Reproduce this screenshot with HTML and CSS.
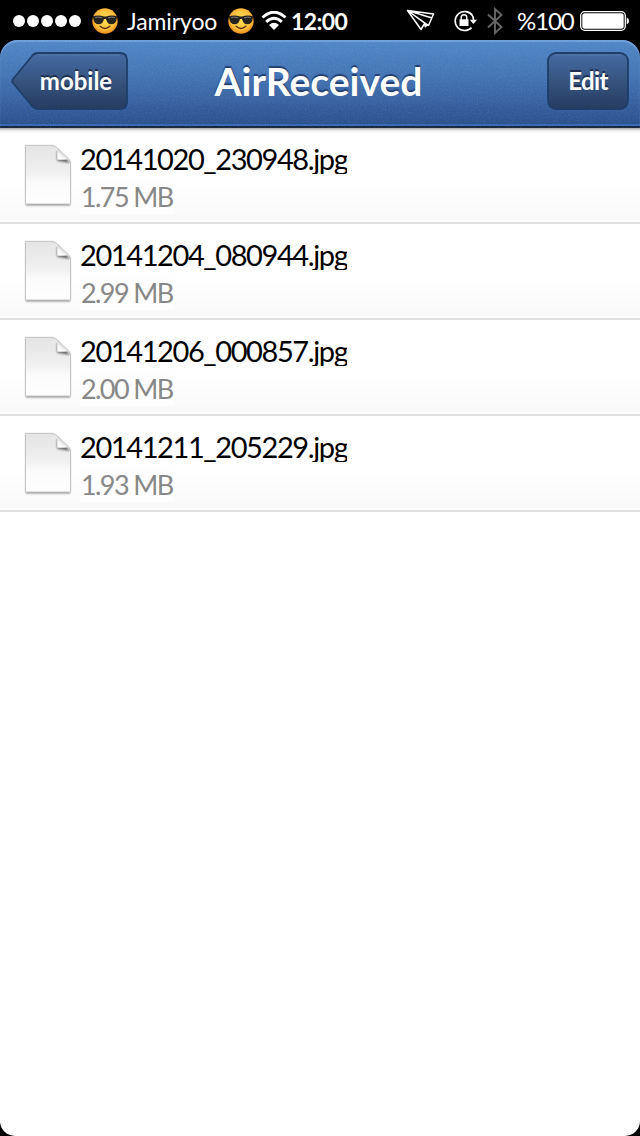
FILE: index.html
```html
<!DOCTYPE html>
<html lang="en">
<head>
<meta charset="utf-8">
<title>AirReceived</title>
<link rel="stylesheet" href="styles.css">
</head>
<body>
<svg class="defs" width="0" height="0" aria-hidden="true">
  <defs>
    <radialGradient id="face" cx=".5" cy=".45" r=".55">
      <stop offset="0" stop-color="#ffe052"/><stop offset=".7" stop-color="#fdc03c"/><stop offset="1" stop-color="#e98b1c"/>
    </radialGradient>
    <linearGradient id="sheet" x1="0" y1="0" x2="0" y2="1">
      <stop offset="0" stop-color="#e4e4e4"/><stop offset=".5" stop-color="#f1f1f1"/><stop offset=".62" stop-color="#fafafa"/><stop offset="1" stop-color="#fff"/>
    </linearGradient>
    <linearGradient id="fold" x1=".1" y1=".9" x2=".7" y2=".2">
      <stop offset="0" stop-color="#fff"/><stop offset=".5" stop-color="#e4e4e4"/><stop offset="1" stop-color="#999"/>
    </linearGradient>
    <linearGradient id="button" x1="0" y1="0" x2="0" y2="1">
      <stop offset="0" stop-color="#456aa3"/><stop offset=".5" stop-color="#36547f"/><stop offset="1" stop-color="#263b61"/>
    </linearGradient>
    <filter id="soft" x="-30%" y="-30%" width="160%" height="160%"><feGaussianBlur stdDeviation="1"/></filter>
    <filter id="grain" x="0" y="0" width="100%" height="100%">
      <feTurbulence type="fractalNoise" baseFrequency=".75" numOctaves="2" seed="4"/>
      <feColorMatrix values="0 0 0 0 1  0 0 0 0 1  0 0 0 0 1  1.2 0 0 0 -.5"/>
    </filter>
    <symbol id="cool" viewBox="0 0 26 26">
      <circle cx="13" cy="13" r="12.7" fill="url(#face)"/>
      <path d="M.8 8.2Q7 6.7 12 8.6h2Q19 6.7 25.2 8.2l-.5 2.2q-.7 5.8-5.4 5.8-4.2 0-5.3-5.3h-2q-1.100 5.300-5.300 5.300-4.700 0-5.400-5.800z" fill="#242220"/>
      <path d="M3 9.500q3.500-1 7.200.4M16 9.900q3.500-1.400 7-.4" stroke="#777" fill="none"/>
      <path d="M8.200 18.300q4.800 4.500 9.600 0" stroke="#5b3010" stroke-width="1.500" fill="none" stroke-linecap="round"/>
    </symbol>
    <symbol id="file" viewBox="0 0 52 66">
      <path d="M3 3h27l17 17v42.300H3z" fill="#777" filter="url(#soft)"/>
      <path d="M2.500 2.500H28Q32 2.500 34 4.500L46 16.500q1.500 2 1.500 4v40.500h-45z" fill="url(#sheet)" stroke="#c6c6c6"/>
      <path d="M34 8v9.500L46.500 20 44 16z" fill="#666" filter="url(#soft)"/>
      <path d="M34.500 5v11.500H46z" fill="url(#fold)"/>
      <path d="M34.500 9v7.500h8z" fill="#fafafa"/>
    </symbol>
  </defs>
</svg>
<div class="screen">
  <header class="status">
    <div class="side">
      <div class="signal"><i></i><i></i><i></i><i></i><i></i></div>
      <svg class="emoji" width="26" height="26"><use href="#cool"/></svg>
      <span class="carrier">Jamiryoo</span>
      <svg class="emoji" width="26" height="26"><use href="#cool"/></svg>
      <svg class="wifi" width="26" height="20" viewBox="0 0 26 20">
        <path d="M1.500 6.500Q13-4 24.500 6.500M5.200 10.800Q13 3.800 20.800 10.800" fill="none" stroke="#fff" stroke-width="3"/>
        <path d="M8 14q5-4.500 10 0l-5 5z" fill="#fff"/>
      </svg>
      <span class="clock">12:00</span>
    </div>
    <div class="side">
      <svg class="plane" width="30" height="24" viewBox="0 0 30 24" fill="none" stroke="#fff" stroke-width="1.500" stroke-linejoin="round">
        <path d="M1.500 1.500L27.500 5 22.500 16.500 18.800 14.200 15 20.500zM1.500 1.500L18.800 14.200M1.500 1.500L22.500 16.500M1.500 1.500L26 9M18.800 14.200l.5 3.500 2-2"/>
      </svg>
      <svg class="lock" width="24" height="22" viewBox="0 0 24 22">
        <path d="M19.400 5.500A9.500 9.500 0 1 0 18.500 17.600M18.500 4.300Q20.700 7 20.600 10.500" fill="none" stroke="#fff" stroke-width="1.600"/>
        <path d="M16.800 9.800h7.200l-3.600 4.200z" fill="#fff"/>
        <path d="M6.500 9.300h9V16h-9z" fill="#fff"/><path d="M8.200 10V7.500a2.800 2.800 0 0 1 5.600 0V10" fill="none" stroke="#fff" stroke-width="1.400"/>
      </svg>
      <svg class="bluetooth" width="16" height="28" viewBox="0 0 16 28"><path d="M1 7.500L14.500 20 8 26V2l6.500 6L1 20.500" fill="none" stroke="#666" stroke-width="1.900"/></svg>
      <span class="percent">%100</span>
      <svg class="battery" width="50" height="20" viewBox="0 0 50 20">
        <rect x=".7" y=".7" width="44.600" height="18.600" rx="4" fill="none" stroke="#fff" stroke-width="1.300"/>
        <rect x="2.300" y="2.300" width="41.400" height="15.400" rx="2.500" fill="#fff"/><path d="M46.700 6.500q2.300.5 2.300 3.500t-2.300 3.500z" fill="#fff"/>
      </svg>
    </div>
  </header>
  <nav class="bar">
    <svg class="texture" width="640" height="88"><rect width="640" height="88" filter="url(#grain)"/></svg>
    <a class="button back">
      <svg class="shape" width="117" height="58" viewBox="0 0 117 58">
        <path d="M27 1H109q7 0 7 7V50q0 7-7 7H27q-3.500 0-6-3L2 31q-1.500-2 0-4L21 4q2.500-3 6-3z" fill="url(#button)" stroke="#1d3f6a" stroke-width="1.800"/>
        <path d="M27 3H109" stroke="#5780b8" opacity=".7"/>
      </svg>
      <span class="label">mobile</span>
    </a>
    <h1 class="title">AirReceived</h1>
    <a class="button edit">
      <svg class="shape" width="82" height="58" viewBox="0 0 82 58">
        <rect x="1" y="1" width="80" height="56" rx="8" fill="url(#button)" stroke="#1d3f6a" stroke-width="1.800"/>
        <path d="M8 3H74" stroke="#5780b8" opacity=".7"/>
      </svg>
      <span class="label">Edit</span>
    </a>
  </nav>
  <main class="files">
    <div class="row"><svg class="icon" width="52" height="66"><use href="#file"/></svg><div class="info"><div class="name">20141020_230948.jpg</div><div class="size">1.75 MB</div></div></div>
    <div class="row"><svg class="icon" width="52" height="66"><use href="#file"/></svg><div class="info"><div class="name">20141204_080944.jpg</div><div class="size">2.99 MB</div></div></div>
    <div class="row"><svg class="icon" width="52" height="66"><use href="#file"/></svg><div class="info"><div class="name">20141206_000857.jpg</div><div class="size">2.00 MB</div></div></div>
    <div class="row"><svg class="icon" width="52" height="66"><use href="#file"/></svg><div class="info"><div class="name">20141211_205229.jpg</div><div class="size">1.93 MB</div></div></div>
  </main>
</div>
</body>
</html>
```
FILE: styles.css
```css
* { box-sizing: border-box; }
body { margin: 0; background: #000; font-family: Lato, "Liberation Sans", sans-serif; }
.defs { position: absolute; }
svg { display: block; flex: none; }
.screen { width: 640px; height: 1136px; display: flex; flex-direction: column; background: #000; overflow: hidden; }
.status { height: 40px; flex: none; display: flex; justify-content: space-between; padding: 0 10px 0 12px; color: #fff; }
.side { display: flex; align-items: center; height: 42px; white-space: nowrap; }
.signal { display: flex; gap: 2px; margin-right: 11px; padding-left: 1px; }
.signal i { width: 12px; height: 12px; border-radius: 50%; background: #fff; }
.carrier { width: 91px; margin: 0 10px 0 9px; font-size: 23px; letter-spacing: -.1px; }
.wifi { margin: 0 4px 0 7px; }
.clock { width: 58px; font-size: 23px; line-height: 28px; padding-bottom: 1px; font-weight: 700; letter-spacing: -.6px; }
.plane { margin-right: 17px; }
.lock { margin-right: 10px; }
.bluetooth { margin-right: 14px; }
.percent { width: 58px; margin-right: 5px; padding-bottom: 2px; font-size: 24px; letter-spacing: -1.100px; }
.bar {
  position: relative; flex: none; height: 88px; padding: 12px 11px; display: flex; justify-content: space-between;
  border-radius: 18px 18px 0 0; overflow: hidden; color: #fff;
  background: linear-gradient(#5186c6, #4475b5 40%, #2d518f 94%);
  box-shadow: inset 0 2px 1px #6fa0da, inset 0 -2px #172642, inset 0 -4px #3568b0;
}
.texture { position: absolute; inset: 0; opacity: .17; }
.button { position: relative; height: 58px; display: flex; align-items: center; justify-content: center; font-size: 24px; font-weight: 700; }
.back { width: 117px; padding-left: 13px; }
.edit { width: 82px; letter-spacing: -.6px; }
.shape { position: absolute; inset: 0; }
.label { position: relative; top: -1px; text-shadow: 0 -2px 0 #1c2f50; }
.title { position: relative; margin: 0; width: 210px; margin-right: 38px; text-align: center; font-size: 39px; line-height: 59px; font-weight: 700; text-shadow: 0 -2px 1px #243f6e; white-space: nowrap; }
.files { flex: 1; background: linear-gradient(#aaa, #f4f4f4 3px, #fff 6px); border-radius: 0 0 15px 15px; }
.row {
  height: 96px; display: flex; padding: 15px 0 0 23px; border-bottom: 2px solid #e0e0e0;
  background: linear-gradient(transparent 60%, #f9f9f9 97%, #fff 98%);
}
.info { margin: 2px 0 0 5px; }
.name { height: 29px; overflow: hidden; font-size: 29px; line-height: 28px; letter-spacing: -1.400px; color: #000; }
.size { width: 94px; height: 36px; margin-top: 4px; padding-left: 1px; background: #fefefe; font-size: 27px; line-height: 38px; letter-spacing: -1.600px; color: #888; white-space: nowrap; }
```
